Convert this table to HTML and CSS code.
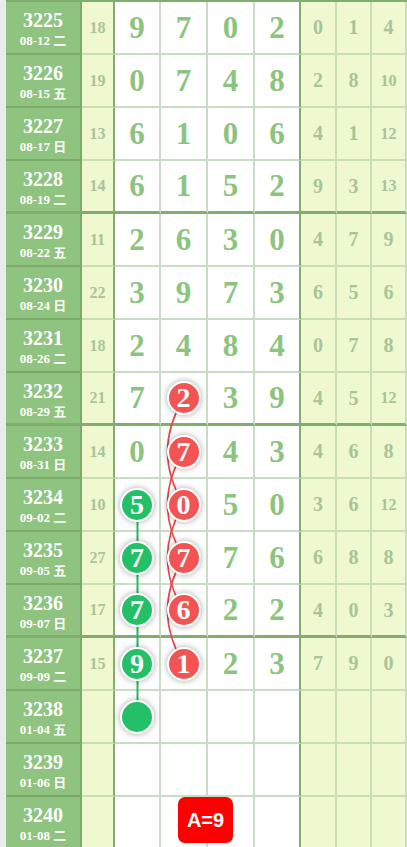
FILE: index.html
```html
<!DOCTYPE html>
<html lang="zh">
<head>
  <meta charset="UTF-8">
  <title>走势图</title>
  <meta name="viewport" content="width=device-width, initial-scale=1.0">
  <link rel="stylesheet" href="styles.css">
</head>
<body>

  <div class="board">

    <div class="row">
      <div class="issue"><b>3225</b><span>08-12 二</span></div>
      <div class="sum">18</div>
      <div class="d">9</div><div class="d">7</div><div class="d">0</div><div class="d end">2</div>
      <div class="s">0</div><div class="s">1</div><div class="s">4</div>
    </div>
    <div class="row">
      <div class="issue"><b>3226</b><span>08-15 五</span></div>
      <div class="sum">19</div>
      <div class="d">0</div><div class="d">7</div><div class="d">4</div><div class="d end">8</div>
      <div class="s">2</div><div class="s">8</div><div class="s small">10</div>
    </div>
    <div class="row">
      <div class="issue"><b>3227</b><span>08-17 日</span></div>
      <div class="sum">13</div>
      <div class="d">6</div><div class="d">1</div><div class="d">0</div><div class="d end">6</div>
      <div class="s">4</div><div class="s">1</div><div class="s small">12</div>
    </div>
    <div class="row sep">
      <div class="issue"><b>3228</b><span>08-19 二</span></div>
      <div class="sum">14</div>
      <div class="d">6</div><div class="d">1</div><div class="d">5</div><div class="d end">2</div>
      <div class="s">9</div><div class="s">3</div><div class="s small">13</div>
    </div>

    <div class="row">
      <div class="issue"><b>3229</b><span>08-22 五</span></div>
      <div class="sum">11</div>
      <div class="d">2</div><div class="d">6</div><div class="d">3</div><div class="d end">0</div>
      <div class="s">4</div><div class="s">7</div><div class="s">9</div>
    </div>
    <div class="row">
      <div class="issue"><b>3230</b><span>08-24 日</span></div>
      <div class="sum">22</div>
      <div class="d">3</div><div class="d">9</div><div class="d">7</div><div class="d end">3</div>
      <div class="s">6</div><div class="s">5</div><div class="s">6</div>
    </div>
    <div class="row">
      <div class="issue"><b>3231</b><span>08-26 二</span></div>
      <div class="sum">18</div>
      <div class="d">2</div><div class="d">4</div><div class="d">8</div><div class="d end">4</div>
      <div class="s">0</div><div class="s">7</div><div class="s">8</div>
    </div>
    <div class="row sep">
      <div class="issue"><b>3232</b><span>08-29 五</span></div>
      <div class="sum">21</div>
      <div class="d">7</div><div class="d"><i class="ball red">2</i></div><div class="d">3</div><div class="d end">9</div>
      <div class="s">4</div><div class="s">5</div><div class="s small">12</div>
    </div>

    <div class="row">
      <div class="issue"><b>3233</b><span>08-31 日</span></div>
      <div class="sum">14</div>
      <div class="d">0</div><div class="d"><i class="ball red">7</i></div><div class="d">4</div><div class="d end">3</div>
      <div class="s">4</div><div class="s">6</div><div class="s">8</div>
    </div>
    <div class="row">
      <div class="issue"><b>3234</b><span>09-02 二</span></div>
      <div class="sum">10</div>
      <div class="d"><i class="ball green">5</i></div><div class="d"><i class="ball red">0</i></div><div class="d">5</div><div class="d end">0</div>
      <div class="s">3</div><div class="s">6</div><div class="s small">12</div>
    </div>
    <div class="row">
      <div class="issue"><b>3235</b><span>09-05 五</span></div>
      <div class="sum">27</div>
      <div class="d"><i class="ball green">7</i></div><div class="d"><i class="ball red">7</i></div><div class="d">7</div><div class="d end">6</div>
      <div class="s">6</div><div class="s">8</div><div class="s">8</div>
    </div>
    <div class="row sep">
      <div class="issue"><b>3236</b><span>09-07 日</span></div>
      <div class="sum">17</div>
      <div class="d"><i class="ball green">7</i></div><div class="d"><i class="ball red">6</i></div><div class="d">2</div><div class="d end">2</div>
      <div class="s">4</div><div class="s">0</div><div class="s">3</div>
    </div>

    <div class="row">
      <div class="issue"><b>3237</b><span>09-09 二</span></div>
      <div class="sum">15</div>
      <div class="d"><i class="ball green">9</i></div><div class="d"><i class="ball red">1</i></div><div class="d">2</div><div class="d end">3</div>
      <div class="s">7</div><div class="s">9</div><div class="s">0</div>
    </div>
    <div class="row">
      <div class="issue"><b>3238</b><span>01-04 五</span></div>
      <div class="sum"></div>
      <div class="d"><i class="ball green"></i></div><div class="d"></div><div class="d"></div><div class="d end"></div>
      <div class="s"></div><div class="s"></div><div class="s"></div>
    </div>
    <div class="row">
      <div class="issue"><b>3239</b><span>01-06 日</span></div>
      <div class="sum"></div>
      <div class="d"></div><div class="d"></div><div class="d"></div><div class="d end"></div>
      <div class="s"></div><div class="s"></div><div class="s"></div>
    </div>
    <div class="row">
      <div class="issue"><b>3240</b><span>01-08 二</span></div>
      <div class="sum"></div>
      <div class="d"></div><div class="d"></div><div class="d"></div><div class="d end"></div>
      <div class="s"></div><div class="s"></div><div class="s"></div>
    </div>

    <!-- connecting lines, drawn under the balls -->
    <svg class="lines" width="401" height="850" viewBox="0 0 401 850">
      <line x1="131.5" y1="504.5" x2="131.5" y2="716.5" stroke="#22b865" stroke-width="2"/>
      <g fill="none" stroke="#e2474a" stroke-width="1.6">
        <path d="M177.5 398.5 Q145.5 451.5 177.5 504.5"/>
        <path d="M177.5 451.5 Q145.5 504.5 177.5 557.5"/>
        <path d="M177.5 504.5 Q145.5 557.5 177.5 610.5"/>
        <path d="M177.5 557.5 Q145.5 610.5 177.5 663.5"/>
      </g>
    </svg>

    <div class="badge">A=9</div>
  </div>

</body>
</html>
```

FILE: styles.css
```css
* {
  box-sizing: border-box;
}

body {
  margin: 0;
  background: #e9ece9;
  overflow: hidden;
  font-family: 'Liberation Serif', 'Noto Sans CJK SC', serif;
}

.board {
  position: relative;
  margin-left: 6px;
  border-top: 2px solid #7fae6e;
  background: #fff;
}

.row {
  display: grid;
  grid-template-columns: 76px 33px 46px 47px 47px 46px 36px 35px 35px;
  height: 53px;
}

.row > div {
  display: flex;
  align-items: center;
  justify-content: center;
  font-weight: bold;
}

/* issue + date column */
.issue {
  flex-direction: column;
  padding-top: 4px;
  background: #8fc380;
  color: #fff;
  border-right: 2px solid #7daa6b;
  border-bottom: 2px solid #7daa6b;
}

.issue b {
  font-size: 20px;
  line-height: 20px;
}

.issue span {
  font-size: 13px;
  line-height: 16px;
  margin-top: 3px;
}

/* sum column */
.sum {
  background: #f0f8d0;
  color: #a7c598;
  font-size: 16px;
  border-right: 2px solid #7fae6e;
  border-bottom: 2px solid #c9ddb6;
}

/* digit columns */
.d {
  position: relative;
  color: #8cc47f;
  font-size: 31px;
  border-right: 2px solid #c8ddc4;
  border-bottom: 2px solid #c8ddc4;
}

.d.end {
  border-right-color: #7fae6e;
}

/* span columns */
.s {
  background: #f0f8d0;
  color: #a7c598;
  font-size: 20px;
  border-right: 2px solid #c9ddb6;
  border-bottom: 2px solid #c9ddb6;
}

.s.small {
  font-size: 16px;
}

.row.sep > div {
  border-bottom: 3px solid #7fae6e;
}

.ball {
  position: relative;
  z-index: 2;
  display: flex;
  align-items: center;
  justify-content: center;
  width: 34px;
  height: 34px;
  border-radius: 50%;
  border: 2px solid #fff;
  box-shadow: 0 0 6px rgba(0, 0, 0, 0.35);
  color: #fff;
  font-style: normal;
  font-size: 28px;
  font-weight: bold;
  line-height: 1;
}

.ball.red {
  background: #f25454;
}

.ball.green {
  background: #23c068;
}

.lines {
  position: absolute;
  left: 0;
  top: -2px;
  z-index: 1;
  pointer-events: none;
}

.badge {
  position: absolute;
  left: 172px;
  top: 795px;
  width: 55px;
  height: 46px;
  border-radius: 7px;
  background: #ff0000;
  color: #fff;
  font-family: 'Liberation Sans', Arial, sans-serif;
  font-size: 20px;
  font-weight: bold;
  display: flex;
  align-items: center;
  justify-content: center;
}
```
